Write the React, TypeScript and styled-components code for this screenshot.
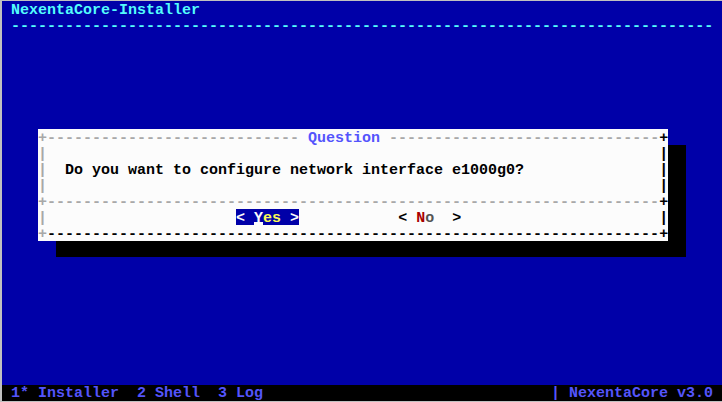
import styled, {createGlobalStyle} from "styled-components"

const C = {
    blue: "#0000a8",
    cyan: "#54fcfc",
    brightBlue: "#5454fc",
    white: "#fcfcfc",
    gray: "#a8a8a8",
    darkGray: "#545454",
    black: "#000000",
    yellow: "#fcfc54",
    red: "#a80000",
    frame: "#c0c0c0",
}

const GlobalStyle = createGlobalStyle`
    html, body {
        margin: 0;
        padding: 0;
        background: ${C.frame};
    }
    body {
        font-family: "Liberation Mono", "DejaVu Sans Mono", monospace;
    }
`

const Frame = styled.div`
    width: 722px;
    height: 402px;
    box-sizing: border-box;
    padding: 1px 0 1px 2px;
    background: ${C.frame};
`

const Screen = styled.div`
    width: 720px;
    height: 400px;
    background: ${C.blue};
    display: flex;
    flex-direction: column;
    font-family: "Liberation Mono", "DejaVu Sans Mono", monospace;
    font-size: 15px;
    font-weight: bold;
    line-height: 19px;
    white-space: pre;
`

const Line = styled.div<{$color?: string}>`
    height: 16px;
    flex-shrink: 0;
    color: ${(p) => p.$color || C.white};
`

const Spacer = styled.div<{$rows: number}>`
    height: ${(p) => p.$rows * 16}px;
    flex-shrink: 0;
`

const DialogArea = styled.div`
    padding-left: 36px;
    height: 112px;
    flex-shrink: 0;
`

const Dialog = styled.div`
    width: 630px;
    background: ${C.white};
    color: ${C.black};
    box-shadow: 18px 16px 0 0 ${C.black};
    display: flex;
    flex-direction: column;
`

const Seg = styled.span<{$c: string}>`
    color: ${(p) => p.$c};
`

const Title = styled.span`
    color: ${C.brightBlue};
`

const Selected = styled.span`
    display: inline-block;
    height: 16px;
    vertical-align: top;
    background: ${C.blue};
    color: ${C.white};
`

const Hot = styled.span<{$c: string}>`
    color: ${(p) => p.$c};
`

const CursorChar = styled.span`
    display: inline-block;
    height: 16px;
    vertical-align: top;
    color: ${C.white};
    box-shadow: inset 0 -3px 0 ${C.white};
`

const StatusBar = styled.div`
    height: 16px;
    line-height: 17px;
    flex-shrink: 0;
    background: ${C.black};
    color: ${C.brightBlue};
    display: flex;
    justify-content: space-between;
    margin-top: auto;
`

const dashes = (n: number) => "-".repeat(n)
const spaces = (n: number) => " ".repeat(n)

const Side = ({children}: {children?: React.ReactNode}) => (
    <Line $color={C.black}>
        <Seg $c={C.gray}>|</Seg>
        {children}
        <Seg $c={C.black}>|</Seg>
    </Line>
)

export default function App() {
    const question = "Do you want to configure network interface e1000g0?"

    return (
        <Frame>
            <GlobalStyle />
            <Screen>
                <Line $color={C.cyan}> NexentaCore-Installer</Line>
                <Line $color={C.cyan}> {dashes(78)}</Line>
                <Spacer $rows={6} />
                <DialogArea>
                    <Dialog>
                        <Line>
                            <Seg $c={C.gray}>+{dashes(28)} </Seg>
                            <Title>Question</Title>
                            <Seg $c={C.gray}> {dashes(30)}</Seg>
                            <Seg $c={C.black}>+</Seg>
                        </Line>
                        <Side>{spaces(68)}</Side>
                        <Side>
                            {"  " + question + spaces(68 - 2 - question.length)}
                        </Side>
                        <Side>{spaces(68)}</Side>
                        <Line>
                            <Seg $c={C.gray}>+{dashes(68)}</Seg>
                            <Seg $c={C.black}>+</Seg>
                        </Line>
                        <Side>
                            {spaces(21)}
                            <Selected>
                                {"< "}
                                <CursorChar>Y</CursorChar>
                                <Hot $c={C.yellow}>es</Hot>
                                {" >"}
                            </Selected>
                            {spaces(11)}
                            <span>
                                {"< "}
                                <Hot $c={C.red}>N</Hot>
                                <Hot $c={C.darkGray}>o</Hot>
                                {"  >"}
                            </span>
                            {spaces(22)}
                        </Side>
                        <Line>
                            <Seg $c={C.gray}>+</Seg>
                            <Seg $c={C.black}>{dashes(68)}+</Seg>
                        </Line>
                    </Dialog>
                </DialogArea>
                <StatusBar>
                    <span> 1* Installer  2 Shell  3 Log</span>
                    <span>| NexentaCore v3.0 </span>
                </StatusBar>
            </Screen>
        </Frame>
    )
}
